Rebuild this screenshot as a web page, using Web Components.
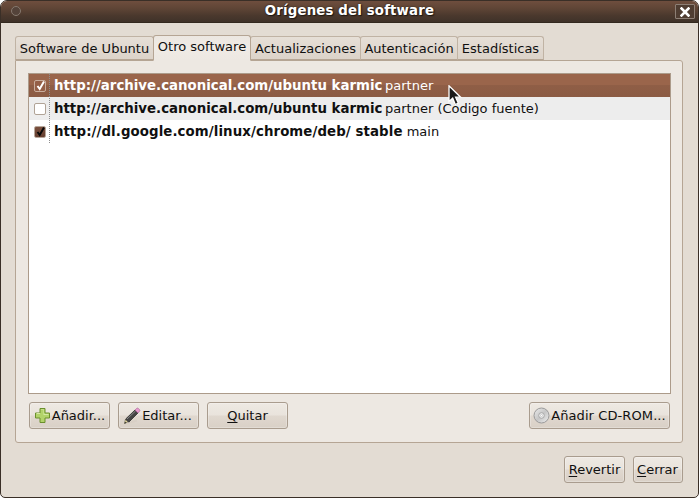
<!DOCTYPE html>
<html lang="es"><head><meta charset="utf-8"><title>Orígenes del software</title>
<style>
html,body{margin:0;padding:0;background:#fff}
body{font:13px/15px "DejaVu Sans",sans-serif;color:#101010;width:699px;height:499px;overflow:hidden}
</style></head><body>
<app-window>
  <win-titlebar slot="title">Orígenes del software</win-titlebar>
  <tab-bar>
    <tab-item style="width:139px">Software de Ubuntu</tab-item>
    <tab-item active style="width:98px">Otro software</tab-item>
    <tab-item style="width:111px">Actualizaciones</tab-item>
    <tab-item style="width:98px">Autenticación</tab-item>
    <tab-item style="width:87px">Estadísticas</tab-item>
  </tab-bar>
  <tab-panel>
    <source-list>
      <source-row selected checked><b>http://archive.canonical.com/ubuntu karmic</b> partner</source-row>
      <source-row alt><b>http://archive.canonical.com/ubuntu karmic</b> partner (Código fuente)</source-row>
      <source-row checked><b style="letter-spacing:.09px;margin-right:0">http://dl.google.com/linux/chrome/deb/ stable</b> main</source-row>
    </source-list>
    <button-row>
      <gtk-button style="width:81px" icon="add">Añadir...</gtk-button>
      <gtk-button style="width:81px;padding-right:2px" icon="edit">Editar...</gtk-button>
      <gtk-button style="width:81px"><u>Q</u>uitar</gtk-button>
      <gtk-button style="width:141px;margin-left:auto;letter-spacing:.1px" icon="cd">Añadir CD-ROM...</gtk-button>
    </button-row>
  </tab-panel>
  <dialog-actions>
    <gtk-button style="width:61px"><u>R</u>evertir</gtk-button>
    <gtk-button style="width:50px;padding-right:1px"><u>C</u>errar</gtk-button>
  </dialog-actions>
  <mouse-cursor></mouse-cursor>
</app-window>
<script>
function def(name,html,init){
  customElements.define(name,class extends HTMLElement{
    constructor(){super();this.attachShadow({mode:'open'}).innerHTML=html}
    connectedCallback(){if(init)init(this)}
  });
}
def('app-window',`<style>
:host{display:flex;flex-direction:column;position:relative;box-sizing:border-box;width:699px;height:498px;background:#e3dcd3;border:1px solid #3a2f27;border-radius:7px 7px 5px 5px;overflow:hidden}
.body{display:flex;flex-direction:column;flex:1;padding:12px 14px 0}
</style><slot name="title"></slot><div class="body"><slot></slot></div>`);
def('win-titlebar',`<style>
:host{display:block;flex:none;height:22px;box-sizing:border-box;position:relative;background:linear-gradient(#6f4e3e 0,#5f4536 35%,#4a382d 70%,#3f3229 100%);border-bottom:1px solid #33291f;color:#fff;font:bold 13.33px/20px "DejaVu Sans",sans-serif;letter-spacing:.15px;text-align:center;text-shadow:1px 1px 1px #1e1711,0 0 2px #2a2018}
.dot{position:absolute;left:10px;top:5px;width:8px;height:8px;border:1px solid #86796f;border-radius:50%;background:#54433a}
.close{position:absolute;right:3px;top:3px;width:20px;height:15px;box-sizing:border-box;border:1px solid #8d7f75;border-radius:1px;background:#4f3d32;display:flex;align-items:center;justify-content:center}
</style><span class="dot"></span><slot></slot><span class="close"><svg width="10" height="10" viewBox="0 0 10 10"><path d="M1.5 1.5L8.5 8.5M8.5 1.5L1.5 8.5" stroke="#fff" stroke-width="2.6" stroke-linecap="square"/></svg></span>`);
def('tab-bar',`<style>
:host{display:flex;align-items:flex-end;height:25px;flex:none;position:relative;z-index:1;gap:0}
</style><slot></slot>`);
def('tab-item',`<style>
:host{display:block;box-sizing:border-box;height:24px;border:1px solid #c0b3a4;border-bottom:1px solid #b5a594;border-radius:3px 3px 0 0;background:linear-gradient(#e6dfd7,#dcd3c9);text-align:center;line-height:21px;padding-top:1px;white-space:nowrap;color:#101010;margin-right:-1px}
:host([active]){height:26px;margin-bottom:-1px;background:linear-gradient(#ece7e1 0,#f0ebe5 50%,#ede8e2 100%);border-color:#b5a594;border-bottom-color:#ede8e2;line-height:21px;padding-top:0;position:relative;z-index:2}
</style><slot></slot>`);
def('tab-panel',`<style>
:host{display:flex;flex-direction:column;box-sizing:border-box;width:668px;height:383px;margin-top:0;background:#ede8e2;border:1px solid #b5a594;border-radius:0 3px 3px 3px;padding:12px 11px 13px 12px}
</style><slot></slot>`);
def('source-list',`<style>
:host{display:flex;flex-direction:column;box-sizing:border-box;height:321px;width:643px;background:#fff;border:1px solid #ac9b8a;position:relative}
.dots{position:absolute;left:20px;top:0;bottom:0;width:0;border-left:1px dotted #8e8e8e;z-index:2;height:69px}
</style><span class="dots"></span><slot></slot>`);
def('source-row',`<style>
:host{display:flex;align-items:center;height:23px;flex:none;color:#101010;white-space:nowrap}
:host([alt]){background:#ededed}
:host([selected]){background:linear-gradient(#9a654b 0,#9a654b 50%,#8f5e46 50%,#8b5b44 100%);color:#fff}
.c{flex:none;width:12px;height:12px;margin:0 8px 0 5px;box-sizing:border-box;border:1px solid #b0a396;border-radius:2px;background:#fff;position:relative;top:0}
:host([checked]) .c{background:linear-gradient(#7a4f3d,#653f30);border-color:#b7a79b}
:host([selected]) .c{border-color:#c9ae9e;background:#955f47}
svg{display:none;position:absolute;left:0;top:-3px}
:host([checked]) svg{display:block}
:host([selected]) path{stroke:#fff}
::slotted(b){font-size:13.33px;margin-right:-1.5px}
</style><span class="c"><svg width="12" height="14" viewBox="0 0 12 14"><path d="M2.500 8l2.200 3L9 3.500" fill="none" stroke="#0a0a0a" stroke-width="2"/></svg></span><span><slot></slot></span>`);
def('button-row',`<style>
:host{display:flex;gap:8px;margin:8px 1px 0;height:27px}
</style><slot></slot>`);
def('dialog-actions',`<style>
:host{display:flex;justify-content:flex-end;gap:8px;margin-top:13px;height:27px;width:668px}
</style><slot></slot>`);
const icons={
 add:`<svg width="17" height="17" viewBox="0 0 17 17"><path d="M6 1.5h5v4.5h4.500v5H11v4.500H6V11H1.500V6H6z" fill="#b2d36a" stroke="#6a8f2c" stroke-width="1"/><path d="M7 2.500h3v4.500h4.500v1H9.500V3H7zM2.500 7h3.500V6H2.500z" fill="#d5e9a4"/></svg>`,
 edit:`<svg width="18" height="18" viewBox="0 0 18 18"><path d="M3 16.500l11-3" stroke="#d6cdc2" stroke-width="2" opacity=".7"/><path d="M1.500 16.500l1-4.200L4.700 15z" fill="#f3e7a8" stroke="#55503c" stroke-width=".6"/><path d="M1.500 16.500l.5-1.800 1.300 1.300z" fill="#222"/><path d="M2.700 12L12 3l3 3-9.200 9.200z" fill="#444" stroke="#222" stroke-width=".7"/><path d="M4 12L12.500 4" stroke="#8a8a8a"/><path d="M12 3l1.600-1.500a1.300 1.300 0 0 1 1.800 0l1 1a1.300 1.300 0 0 1 0 1.900L15 6z" fill="#e79ad0" stroke="#a35d90" stroke-width=".6"/></svg>`,
 cd:`<svg width="17" height="17" viewBox="0 0 17 17"><defs><linearGradient id="g" x1="0" y1="0" x2="1" y2="1"><stop offset="0" stop-color="#ececec"/><stop offset=".5" stop-color="#c6c6c6"/><stop offset="1" stop-color="#efefef"/></linearGradient></defs><circle cx="8.500" cy="8.500" r="7.500" fill="url(#g)" stroke="#9a9a9a"/><circle cx="8.500" cy="8.500" r="2.800" fill="#efefef" stroke="#a6a6a6"/><circle cx="8.500" cy="8.500" r="1" fill="#fff" stroke="#aaa" stroke-width=".5"/></svg>`
};
def('gtk-button',`<style>
:host{display:flex;align-items:center;justify-content:center;box-sizing:border-box;height:27px;flex:none;border:1px solid #a99c8e;border-radius:3px;background:linear-gradient(#eee9e3 0,#e9e3dc 48%,#e0d8cf 52%,#d9d0c6 100%);box-shadow:inset 0 0 0 1px rgba(255,255,255,.25);white-space:nowrap;color:#101010}
.i{display:flex;margin-right:1px}
.i:empty{display:none}
::slotted(u){text-underline-offset:2px}
</style><span class="i"></span><span><slot></slot></span>`,el=>{
  const k=el.getAttribute('icon'); if(k) el.shadowRoot.querySelector('.i').innerHTML=icons[k];
});
def('mouse-cursor',`<style>
:host{position:absolute;left:447px;top:84px;display:block;width:15px;height:23px;z-index:5;line-height:0}
</style><svg width="15" height="23" viewBox="0 0 15 23"><path d="M1 .8V16.500l3.700-3.300 2.600 6.300 3-1.300-2.700-6h5z" fill="#1a1a1a" stroke="#fff" stroke-width="1.300"/></svg>`);
</script>
</body></html>
